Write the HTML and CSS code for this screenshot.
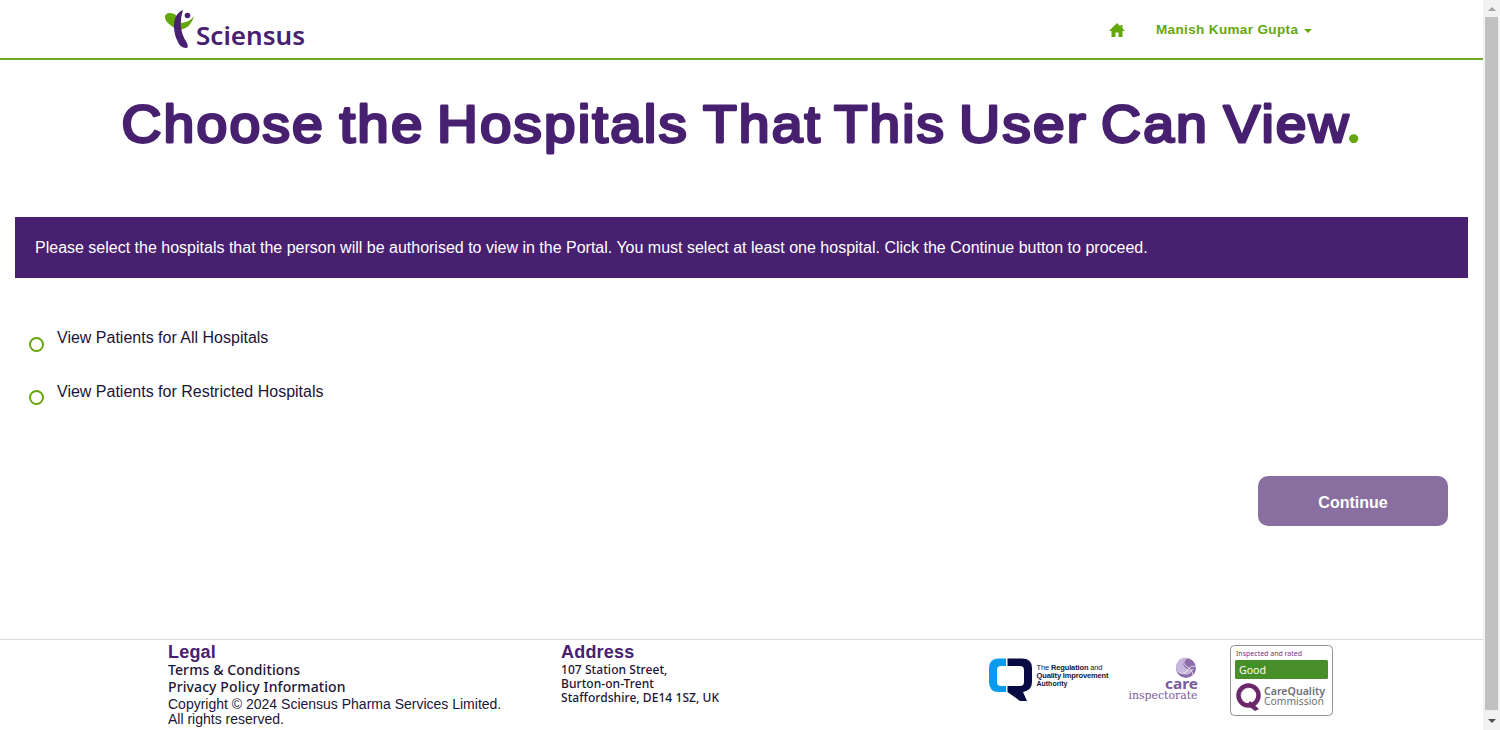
FILE: index.html
```html
<!DOCTYPE html>
<html lang="en">
<head>
<meta charset="utf-8">
<title>Choose the Hospitals That This User Can View</title>
<link rel="stylesheet" href="styles.css">
</head>
<body>
<div class="window">
<div class="page">
  <header class="header">
    <a class="brand">
      <svg width="150" height="48" viewBox="164 8 150 48">
        <path d="M179 30C169 26 164 20 165 16C166 12 173 12 177 16L181 21Z" fill="#64a70b"/>
        <path d="M180 30Q191 28 194 16Q190 22 181 23Z" fill="#64a70b"/>
        <path d="M183 10C173 14 172 28 177 40Q180 48 186 48Q189 48 187 43C179 31 180 20 183 10Z" fill="#482070"/>
        <circle cx="187.500" cy="15.500" r="2.800" fill="#482070"/>
        <text class="brand-name" x="196" y="45" textLength="109" lengthAdjust="spacingAndGlyphs">Sciensus</text>
      </svg>
    </a>
    <nav class="nav">
      <svg class="home" width="16" height="15" viewBox="0 0 16 15"><path d="M8 0L11.500 3.500V2H13.500V5.500L16 8H13.500V14H9.500V9.500H6.500V14H2.500V8H0Z" fill="#64a70b"/></svg>
      <span class="user">Manish Kumar Gupta</span><span class="caret"></span>
    </nav>
  </header>
  <main class="main">
    <h1 class="title">
      <svg width="1253" height="80" viewBox="115 87 1253 80">
        <g class="title-words">
          <text x="121.500" y="141.700" textLength="203.500" lengthAdjust="spacingAndGlyphs">Choose</text>
          <text x="339.500" y="141.700" textLength="85" lengthAdjust="spacingAndGlyphs">the</text>
          <text x="437" y="141.700" textLength="252" lengthAdjust="spacingAndGlyphs">Hospitals</text>
          <text x="703" y="141.700" textLength="119" lengthAdjust="spacingAndGlyphs">That</text>
          <text x="834" y="141.700" textLength="112" lengthAdjust="spacingAndGlyphs">This</text>
          <text x="959" y="141.700" textLength="129" lengthAdjust="spacingAndGlyphs">User</text>
          <text x="1101" y="141.700" textLength="108" lengthAdjust="spacingAndGlyphs">Can</text>
          <text x="1223.500" y="141.700" textLength="127" lengthAdjust="spacingAndGlyphs">View</text>
        </g>
        <text class="title-dot" x="1347" y="143">.</text>
      </svg>
    </h1>
    <div class="notice">Please select the hospitals that the person will be authorised to view in the Portal. You must select at least one hospital. Click the Continue button to proceed.</div>
    <div class="options">
      <label class="option"><span class="radio"></span><span>View Patients for All Hospitals</span></label>
      <label class="option"><span class="radio radio-second"></span><span>View Patients for Restricted Hospitals</span></label>
    </div>
    <div class="actions"><button class="continue">Continue</button></div>
  </main>
  <footer class="footer">
    <section class="legal">
      <h2 class="legal-head">Legal</h2>
      <a class="terms">Terms &amp; Conditions</a>
      <a class="privacy">Privacy Policy Information</a>
      <p>Copyright © 2024 Sciensus Pharma Services Limited.<br>All rights reserved.</p>
    </section>
    <section class="address">
      <h2>Address</h2>
      <p>107 Station Street,<br>Burton-on-Trent<br>Staffordshire, DE14 1SZ, UK</p>
    </section>
    <svg class="badges" width="350" height="80" viewBox="985 640 350 80">
      <path d="M1006 658.500H999Q989 658.500 989 668V682Q989 692 999 692H1006V686H1001Q997 686 997 682V670Q997 666 1001 666H1006Z" fill="#0a9bef"/>
      <path d="M1007.500 658.500H1022Q1032 658.500 1032 668V682Q1032 690 1023 692L1027 701H1020L1007.500 692V686H1020Q1024 686 1024 682V670Q1024 666 1020 666H1007.500Z" fill="#080b43"/>
      <g class="rqia">
        <text x="1036.500" y="670.300" textLength="66"><tspan class="light">The</tspan> Regulation <tspan class="light">and</tspan></text>
        <text x="1036.500" y="678.300" textLength="72">Quality Improvement</text>
        <text x="1036.500" y="686.300" textLength="31" lengthAdjust="spacingAndGlyphs">Authority</text>
      </g>
      <circle cx="1186" cy="668" r="10" fill="#8c6cab"/>
      <path d="M1176 668C1176 661 1181 657 1186 658Q1180 663 1186 668Q1190 671 1194 668Q1190 677 1183 674Q1177 672 1176 668Z" fill="#c9b6dc"/>
      <path d="M1187 658Q1181 662 1186 666Q1192 669 1193 675M1177 671Q1183 676 1187 671Q1191 664 1196 667" fill="none" stroke="#f4eff8" stroke-width=".8"/>
      <text class="care" x="1165" y="689" textLength="33" lengthAdjust="spacingAndGlyphs">care</text>
      <text class="inspectorate" x="1128.500" y="699" textLength="69" lengthAdjust="spacingAndGlyphs">inspectorate</text>
      <rect x="1230.500" y="645.500" width="102" height="70" rx="4" fill="#fff" stroke="#8f919b"/>
      <text class="rated" x="1236" y="656" textLength="66" lengthAdjust="spacingAndGlyphs">Inspected and rated</text>
      <rect x="1235" y="660" width="93" height="19" rx="1.500" fill="#488f29"/>
      <text class="good" x="1239" y="674" textLength="27" lengthAdjust="spacingAndGlyphs">Good</text>
      <circle cx="1248.500" cy="695.500" r="10" fill="none" stroke="#6c276a" stroke-width="4.500"/>
      <path d="M1250 701L1259 709L1255 711L1247 705Z" fill="#6c276a"/>
      <path d="M1241 696Q1242 689 1248 688" fill="none" stroke="#c9a9c8" stroke-width=".7"/>
      <text class="cq cq-bold" x="1264" y="695" textLength="61" lengthAdjust="spacingAndGlyphs">CareQuality</text>
      <text class="cq" x="1264" y="705" textLength="60" lengthAdjust="spacingAndGlyphs">Commission</text>
    </svg>
  </footer>
</div>
<div class="scrollbar"><i class="up"></i><div class="thumb"></div><i class="down"></i></div>
</div>
</body>
</html>
```
FILE: styles.css
```css
* { box-sizing: border-box; }
body { margin: 0; background: #fff; color: #1c1438; font-family: "Liberation Sans", Arial, sans-serif; overflow: hidden; }
svg { display: block; }
svg text { white-space: pre; }
h1, h2, p { margin: 0; }
.window { display: flex; height: 730px; }
.page { width: 1483px; display: flex; flex-direction: column; }
.header { height: 60px; border-bottom: 2px solid #70a82a; display: flex; justify-content: space-between; padding: 8px 171px 0 164px; }
.brand-name { font: 600 25.500px "Noto Sans", sans-serif; fill: #482070; }
.nav { display: flex; align-items: flex-start; color: #64a70b; }
.home { margin: 15px 31px 0 0; }
.user { font: bold 13.500px/16px "Liberation Sans", sans-serif; margin-top: 14px; width: 148px; letter-spacing: .36px; white-space: nowrap; }
.caret { margin-top: 21px; border: 4px solid transparent; border-top-color: #64a70b; border-bottom: 0; }
.main { height: 579px; padding: 27px 15px 0; }
.title { height: 130px; padding-left: 100px; }
.title-words { font: 400 52.500px "Liberation Sans", sans-serif; letter-spacing: 2px; fill: #482070; stroke: #482070; stroke-width: 2.800px; stroke-linejoin: round; }
.title-dot { font: 900 56px Lato, sans-serif; fill: #64a70b; }
.notice { height: 61px; background: #482070; color: #fff; font-size: 16px; line-height: 61px; padding-left: 20px; white-space: nowrap; }
.options { padding: 50px 0 0 14px; height: 198px; }
.option { display: flex; height: 54px; gap: 13px; font-size: 16px; line-height: 20px; }
.radio { width: 15px; height: 15px; margin-top: 9px; border: 2px solid #64a70b; border-radius: 50%; }
.radio-second { margin-top: 8px; }
.actions { display: flex; justify-content: flex-end; padding-right: 20px; }
.continue { width: 190px; height: 50px; border: 0; border-radius: 10px; background: #896fa0; color: #fff; font: bold 16px "Liberation Sans", sans-serif; padding: 3px 0 0; }
.footer { height: 91px; border-top: 1px solid #dcdbe5; display: flex; padding-left: 168px; }
.footer h2 { color: #482070; font-size: 18px; line-height: 22px; letter-spacing: .2px; padding-top: 1px; }
.footer .legal-head { height: 21px; }
.legal { width: 393px; }
.legal a { display: block; font: 500 14px/17px "Noto Sans", sans-serif; letter-spacing: .1px; }
.legal p { font-size: 14px; line-height: 15px; padding-top: 2px; }
.address { width: 424px; }
.address p { font: 500 12px/14px "Noto Sans", sans-serif; letter-spacing: .06px; }
.rqia { font: bold 7.500px "Liberation Sans", sans-serif; fill: #111443; }
.light { font-weight: 400; }
.care { font: bold 14px "Noto Sans", sans-serif; fill: #7c5a9d; }
.inspectorate { font: 11.500px "DejaVu Serif", serif; fill: #7c5a9d; }
.rated { font: 7.500px "Noto Sans", sans-serif; fill: #7c3079; }
.good { font: 11.500px "Noto Sans", sans-serif; fill: #fff; }
.cq { font: 11.500px "Noto Sans", sans-serif; fill: #68717c; }
.cq-bold { font-weight: 600; }
.scrollbar { width: 17px; background: #f1f1f1; display: flex; flex-direction: column; align-items: center; }
.thumb { width: 13px; height: 693px; background: #c1c1c1; margin: 6px 0 9px; }
.up, .down { width: 0; height: 4px; border: 4px solid transparent; }
.up { margin-top: 7px; border-top: 0; border-bottom-color: #a3a3a3; }
.down { border-bottom: 0; border-top-color: #505050; }
```
